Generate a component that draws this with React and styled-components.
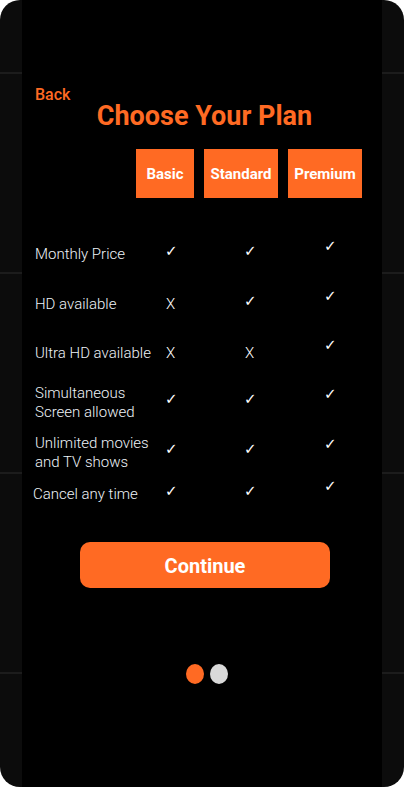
import React from "react";
import styled, { createGlobalStyle } from "styled-components";

const ORANGE = "#ff6a23";

const GlobalStyle = createGlobalStyle`
  html, body {
    margin: 0;
    padding: 0;
    background: #ffffff;
  }
  body {
    font-family: Roboto, "Liberation Sans", Arial, sans-serif;
  }
  * {
    box-sizing: border-box;
  }
`;

const Frame = styled.div`
  width: 404px;
  height: 787px;
  border-radius: 20px;
  overflow: hidden;
  display: flex;
  justify-content: center;
  background-color: #0c0c0c;
  background-image: repeating-linear-gradient(
    to bottom,
    transparent 0px,
    transparent 72px,
    #1c1c1c 72px,
    #1c1c1c 74px,
    transparent 74px,
    transparent 200px
  );
`;

const Screen = styled.main`
  width: 360px;
  height: 787px;
  background: #000000;
  display: flex;
  flex-direction: column;
  padding-top: 87px;
`;

const BackLink = styled.a`
  align-self: flex-start;
  margin-left: 13px;
  font-size: 16px;
  line-height: 16px;
  font-weight: 500;
  color: ${ORANGE};
  cursor: pointer;
`;

const Title = styled.h1`
  margin: 0;
  padding-left: 5px;
  text-align: center;
  font-size: 27px;
  line-height: 26px;
  font-weight: 700;
  color: ${ORANGE};
`;

const PlanRow = styled.div`
  display: flex;
  gap: 10px;
  margin-top: 20px;
  padding-left: 114px;
`;

const PlanBox = styled.div`
  width: ${(p) => p.$w}px;
  height: 49px;
  background: ${ORANGE};
  color: #ffffff;
  font-size: 15px;
  font-weight: 700;
  display: flex;
  align-items: center;
  justify-content: center;
`;

const Table = styled.div`
  margin-top: 31px;
  display: flex;
  flex-direction: column;
`;

const Row = styled.div`
  height: ${(p) => p.$h}px;
  display: grid;
  grid-template-columns: 130px 79px 80px 1fr;
  align-items: center;
  padding-left: 13px;
`;

const Label = styled.div`
  font-size: 15px;
  line-height: 19px;
  font-weight: 300;
  color: #eef3f8;
  margin-left: ${(p) => p.$shift || 0}px;
  white-space: nowrap;
`;

const Cell = styled.div`
  color: #ffffff;
  font-size: 15px;
  font-weight: ${(p) => (p.$check ? 700 : 300)};
  line-height: 19px;
  padding-left: ${(p) => (p.$check ? 0 : 1)}px;
  font-family: ${(p) =>
    p.$check
      ? '"DejaVu Sans", Roboto, sans-serif'
      : 'Roboto, "Liberation Sans", sans-serif'};
  margin-bottom: ${(p) => (p.$raised ? 16 : p.$check ? 6 : 0)}px;
`;

const ContinueButton = styled.button`
  margin-top: 31px;
  margin-left: 58px;
  width: 250px;
  height: 46px;
  border: none;
  border-radius: 10px;
  background: ${ORANGE};
  color: #ffffff;
  font-family: Roboto, "Liberation Sans", sans-serif;
  font-size: 20px;
  font-weight: 700;
  padding-top: 2px;
  cursor: pointer;
`;

const Dots = styled.div`
  margin-top: 76px;
  display: flex;
  justify-content: center;
  gap: 6px;
  padding-left: 10px;
`;

const Dot = styled.span`
  width: 18px;
  height: 20px;
  border-radius: 50%;
  background: ${(p) => (p.$active ? ORANGE : "#d9d9d9")};
`;

const plans = [
  { name: "Basic", w: 58 },
  { name: "Standard", w: 74 },
  { name: "Premium", w: 74 },
];

const features = [
  { label: "Monthly Price", h: 50, values: [true, true, true] },
  { label: "HD available", h: 50, values: [false, true, true] },
  { label: "Ultra HD available", h: 48, values: [false, false, true] },
  { label: ["Simultaneous", "Screen allowed"], h: 51, values: [true, true, true] },
  { label: ["Unlimited movies", "and TV shows"], h: 49, values: [true, true, true] },
  { label: "Cancel any time", h: 34, values: [true, true, true], shift: -2 },
];

const renderLabel = (label) =>
  Array.isArray(label)
    ? label.map((line, i) => (
        <React.Fragment key={line}>
          {i > 0 && <br />}
          {line}
        </React.Fragment>
      ))
    : label;

const App = () => {
  return (
    <>
      <GlobalStyle />
      <Frame>
        <Screen>
          <BackLink>Back</BackLink>
          <Title>Choose Your Plan</Title>
          <PlanRow>
            {plans.map((p) => (
              <PlanBox key={p.name} $w={p.w}>
                {p.name}
              </PlanBox>
            ))}
          </PlanRow>
          <Table>
            {features.map((f, i) => (
              <Row key={i} $h={f.h}>
                <Label $shift={f.shift}>{renderLabel(f.label)}</Label>
                {f.values.map((ok, j) => (
                  <Cell key={j} $check={ok} $raised={ok && j === 2}>
                    {ok ? "✓" : "X"}
                  </Cell>
                ))}
              </Row>
            ))}
          </Table>
          <ContinueButton type="button">Continue</ContinueButton>
          <Dots>
            <Dot $active />
            <Dot />
          </Dots>
        </Screen>
      </Frame>
    </>
  );
};

export default App;
